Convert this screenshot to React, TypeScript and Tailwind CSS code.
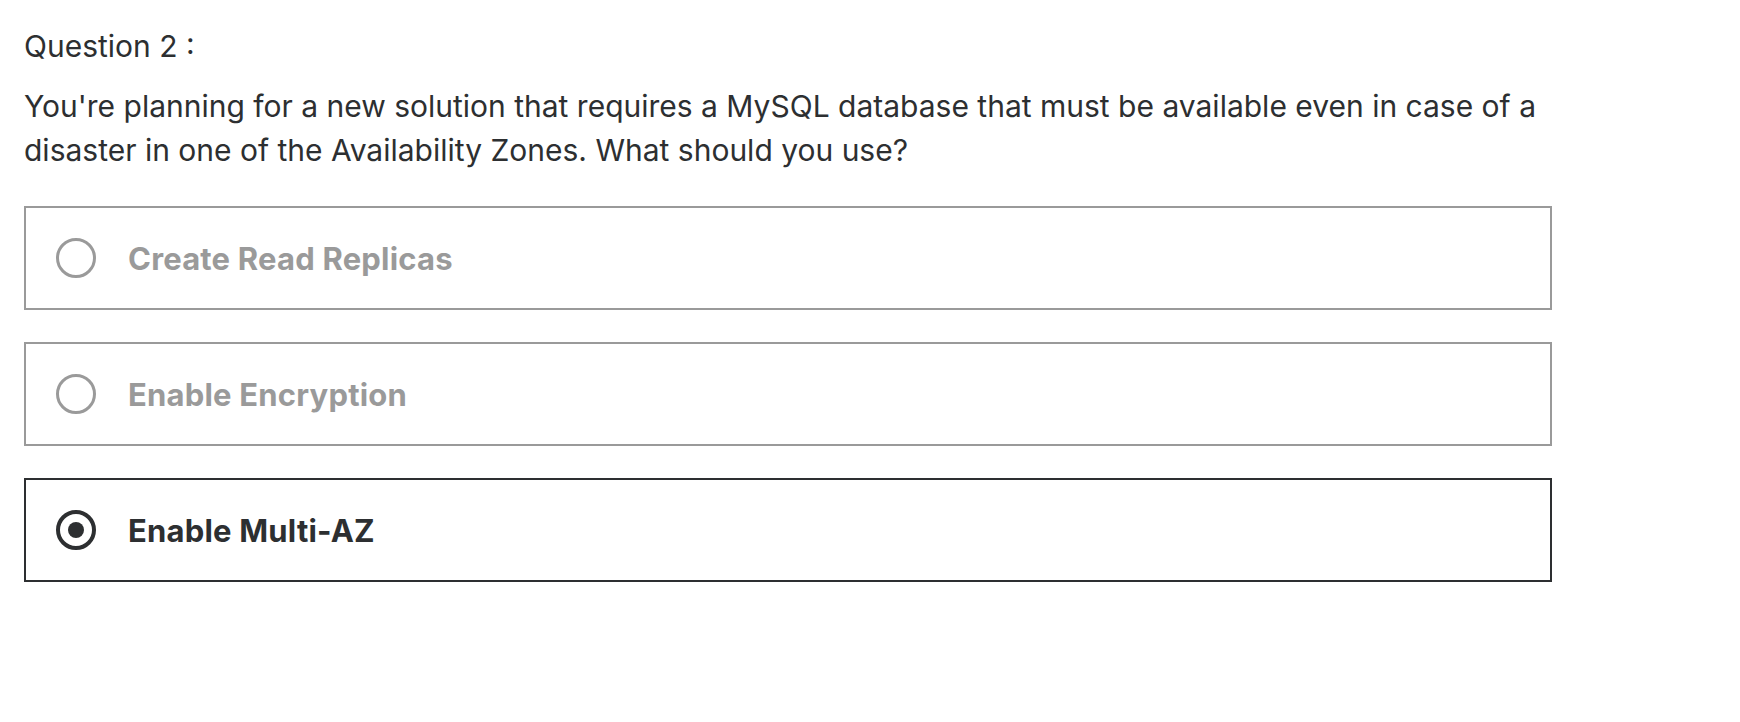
import React, { useState } from "react";

const options = ["Create Read Replicas", "Enable Encryption", "Enable Multi-AZ"];

function Radio({ checked }: { checked: boolean }) {
  return (
    <span
      className={
        "flex h-[40px] w-[40px] shrink-0 items-center justify-center rounded-full " +
        (checked ? "border-[4px] border-[#2d2f31]" : "border-[3px] border-[#9a9a9a]")
      }
    >
      {checked && <span className="h-[16px] w-[16px] rounded-full bg-[#2d2f31]" />}
    </span>
  );
}

export default function App() {
  const [selected, setSelected] = useState(2);

  return (
    <div
      className="min-h-screen bg-white px-[24px] pt-[24px] text-[#2d2f31]"
      style={{ fontFamily: 'Inter, "Liberation Sans", Arial, sans-serif' }}
    >
      <div className="text-[30px] leading-[44px]">Question 2 :</div>
      <p className="mt-[16px] w-[1528px] text-[30px] leading-[44px]">
        You're planning for a new solution that requires a MySQL database that must be available even in case of a
        disaster in one of the Availability Zones. What should you use?
      </p>
      <div className="mt-[34px] flex w-[1528px] flex-col gap-[32px]">
        {options.map((opt, i) => {
          const checked = selected === i;
          return (
            <button
              key={opt}
              onClick={() => setSelected(i)}
              className={
                "flex h-[104px] items-center gap-[32px] border-2 bg-white pl-[30px] text-left " +
                (checked ? "border-[#2d2f31] text-[#2d2f31]" : "border-[#9a9a9a] text-[#9a9a9a]")
              }
            >
              <Radio checked={checked} />
              <span className="text-[31px] font-bold leading-none tracking-[0.2px]">{opt}</span>
            </button>
          );
        })}
      </div>
    </div>
  );
}
